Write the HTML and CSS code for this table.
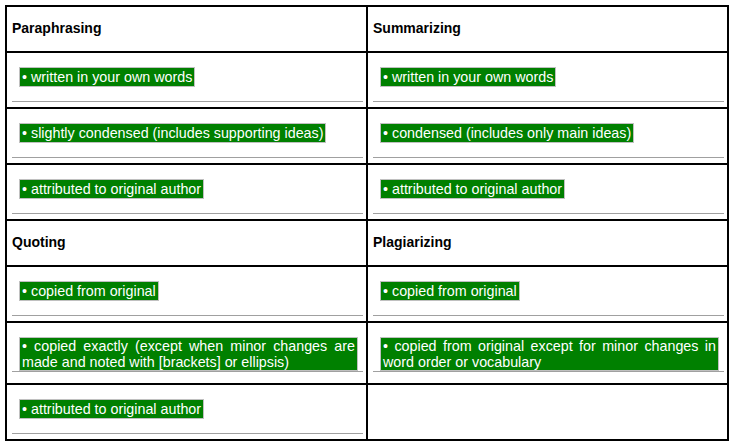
FILE: index.html
```html
<!DOCTYPE html>
<html lang="en">
<head>
<meta charset="utf-8">
<title>Paraphrasing, Summarizing, Quoting, Plagiarizing</title>
<link rel="stylesheet" href="styles.css">
</head>
<body>
<div class="page">
  <table class="compare">
    <colgroup><col class="col"><col class="col"></colgroup>
    <tr>
      <th class="head">Paraphrasing</th>
      <th class="head">Summarizing</th>
    </tr>
    <tr>
      <td class="cell"><div class="item"><span class="hl">• written in your own words</span></div></td>
      <td class="cell"><div class="item"><span class="hl">• written in your own words</span></div></td>
    </tr>
    <tr>
      <td class="cell"><div class="item"><span class="hl">• slightly condensed (includes supporting ideas)</span></div></td>
      <td class="cell"><div class="item"><span class="hl">• condensed (includes only main ideas)</span></div></td>
    </tr>
    <tr>
      <td class="cell"><div class="item"><span class="hl">• attributed to original author</span></div></td>
      <td class="cell"><div class="item"><span class="hl">• attributed to original author</span></div></td>
    </tr>
    <tr>
      <th class="head">Quoting</th>
      <th class="head">Plagiarizing</th>
    </tr>
    <tr>
      <td class="cell"><div class="item"><span class="hl">• copied from original</span></div></td>
      <td class="cell"><div class="item"><span class="hl">• copied from original</span></div></td>
    </tr>
    <tr>
      <td class="cell"><div class="item item--wrap"><span class="hl hl--block">• copied exactly (except when minor changes are made and noted with [brackets] or ellipsis)</span></div></td>
      <td class="cell"><div class="item item--wrap"><span class="hl hl--block">• copied from original except for minor changes in word order or vocabulary</span></div></td>
    </tr>
    <tr>
      <td class="cell"><div class="item"><span class="hl">• attributed to original author</span></div></td>
      <td class="cell"></td>
    </tr>
  </table>
</div>
</body>
</html>
```
FILE: styles.css
```css
html, body {
  margin: 0;
  padding: 0;
  background: #ffffff;
}

body {
  font-family: "Liberation Sans", Arial, sans-serif;
  font-size: 14px;
  color: #000000;
}

.page {
  padding: 5px;
}

.compare {
  width: 724px;
  table-layout: fixed;
  border-collapse: separate;
  border-spacing: 0;
  border: 1px solid #000000;
}

.col {
  width: 50%;
}

.head {
  border: 1px solid #000000;
  padding: 13px 3px 15px 5px;
  line-height: 16px;
  font-weight: bold;
  font-size: 14px;
  text-align: left;
  vertical-align: middle;
}

.cell {
  border: 1px solid #000000;
  padding: 14px 3px 5px 5px;
  vertical-align: top;
}

.item {
  display: flex;
  align-items: flex-start;
  padding: 0 5px 14px 7px;
  border-bottom: 1px solid #a0a0a0;
}

.item--wrap {
  padding-bottom: 0;
  margin-bottom: 6px;
}

.hl {
  display: block;
  background: #008000;
  color: #ffffff;
  border: 1px solid #c0c0c0;
  padding: 1px 2px;
  font-size: 14.3px;
  line-height: 16px;
  white-space: nowrap;
}

.hl--block {
  flex: 1 1 auto;
  padding: 0 2px;
  white-space: normal;
  text-align: justify;
}
```
